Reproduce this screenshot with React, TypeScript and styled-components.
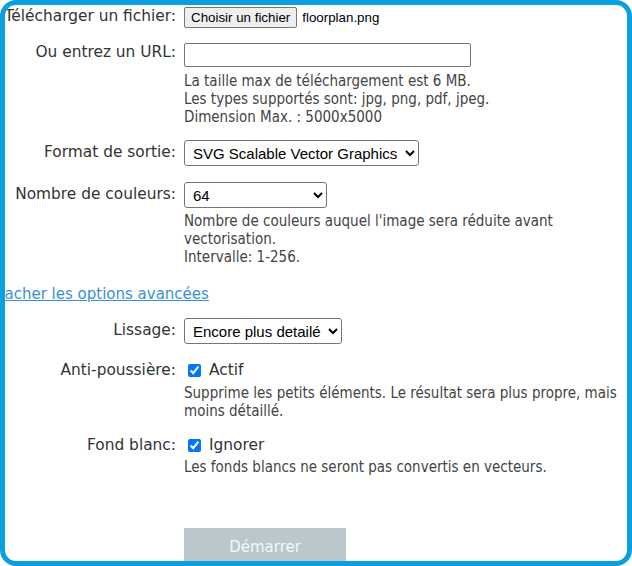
import React from "react";
import styled, { createGlobalStyle } from "styled-components";

const Global = createGlobalStyle`
  html, body { margin: 0; padding: 0; background: #fff; }
  body { font-family: "DejaVu Sans", Verdana, sans-serif; }
`;

const Frame = styled.div`
  box-sizing: border-box;
  width: 632px;
  height: 566px;
  border: 5px solid #0b9fe0;
  border-radius: 16px;
  overflow: hidden;
  background: #fff;
`;

const Form = styled.div`
  margin-left: -11px;
  padding-top: 2px;
  display: grid;
  grid-template-columns: 182px 1fr;
  column-gap: 8px;
  color: #333;
  font-size: 15.4px;
  line-height: 18px;
`;

const LabelCell = styled.div<{ $mt?: number; $pt?: number }>`
  text-align: right;
  white-space: nowrap;
  margin-top: ${(p) => p.$mt ?? 0}px;
  padding-top: ${(p) => p.$pt ?? 0}px;
`;

const Cell = styled.div<{ $mt?: number }>`
  margin-top: ${(p) => p.$mt ?? 0}px;
`;

const FileRow = styled.div`
  display: flex;
  align-items: center;
  gap: 5px;
  font-family: "Liberation Sans", Arial, sans-serif;
  font-size: 13.33px;
  color: #000;
`;

const FileButton = styled.button`
  box-sizing: border-box;
  height: 21px;
  padding: 0 6px;
  font-family: "Liberation Sans", Arial, sans-serif;
  font-size: 13.33px;
  color: #000;
  background: #efefef;
  border: 1px solid #767676;
  border-radius: 2px;
`;

const TextInput = styled.input`
  box-sizing: border-box;
  display: block;
  width: 287px;
  height: 24px;
  border: 1px solid #767676;
  border-radius: 2px;
  padding: 1px 2px;
  font-size: 15px;
  outline: none;
`;

const Select = styled.select<{ $w?: number }>`
  box-sizing: border-box;
  display: block;
  height: 26px;
  ${(p) => (p.$w ? `width: ${p.$w}px;` : "")}
  font-family: "Liberation Sans", Arial, sans-serif;
  font-size: 15px;
  color: #000;
  background: #fff;
  border: 1px solid #767676;
  border-radius: 3px;
  padding: 0 4px;
`;

const Help = styled.div<{ $mt?: number }>`
  margin-top: ${(p) => p.$mt ?? 0}px;
  color: #444;
  font-family: "DejaVu Sans Condensed", "DejaVu Sans", Tahoma, sans-serif;
  font-stretch: condensed;
  font-size: 15px;
  padding-right: 2px;
`;

const Link = styled.a`
  grid-column: 1 / -1;
  color: #3a8fd8;
  font-size: 15px;
  text-decoration: underline;
  margin-top: 19px;
  cursor: pointer;
`;

const CheckRow = styled.label`
  display: flex;
  align-items: center;
  height: 18px;
`;

const Check = styled.input`
  width: 13px;
  height: 13px;
  margin: 0 8px 0 4px;
`;

const Submit = styled.button`
  box-sizing: border-box;
  width: 162px;
  height: 38px;
  border: none;
  background: #bac7cd;
  color: #f4f7f8;
  font-family: "DejaVu Sans", Verdana, sans-serif;
  font-size: 15px;
`;

export default function App() {
  return (
    <>
      <Global />
      <Frame>
        <Form>
          <LabelCell $mt={0}>Télécharger un fichier:</LabelCell>
          <Cell $mt={0}>
            <FileRow>
              <FileButton>Choisir un fichier</FileButton>
              <span>floorplan.png</span>
            </FileRow>
          </Cell>

          <LabelCell $mt={15}>Ou entrez un URL:</LabelCell>
          <Cell $mt={15}>
            <TextInput type="text" />
            <Help $mt={5}>
              La taille max de téléchargement est 6 MB.
              <br />
              Les types supportés sont: jpg, png, pdf, jpeg.
              <br />
              Dimension Max. : 5000x5000
            </Help>
          </Cell>

          <LabelCell $mt={14} $pt={3}>Format de sortie:</LabelCell>
          <Cell $mt={14}>
            <Select defaultValue="svg">
              <option value="svg">SVG Scalable Vector Graphics</option>
            </Select>
          </Cell>

          <LabelCell $mt={16} $pt={3}>Nombre de couleurs:</LabelCell>
          <Cell $mt={16}>
            <Select defaultValue="64" $w={143}>
              <option value="64">64</option>
            </Select>
            <Help $mt={4}>
              Nombre de couleurs auquel l'image sera réduite avant
              vectorisation.
              <br />
              Intervalle: 1-256.
            </Help>
          </Cell>

          <Link>Cacher les options avancées</Link>

          <LabelCell $mt={15} $pt={3}>Lissage:</LabelCell>
          <Cell $mt={15}>
            <Select defaultValue="x">
              <option value="x">Encore plus detailé</option>
            </Select>
          </Cell>

          <LabelCell $mt={17}>Anti-poussière:</LabelCell>
          <Cell $mt={17}>
            <CheckRow>
              <Check type="checkbox" defaultChecked />
              Actif
            </CheckRow>
            <Help $mt={5}>
              Supprime les petits éléments. Le résultat sera plus propre, mais
              moins détaillé.
            </Help>
          </Cell>

          <LabelCell $mt={16}>Fond blanc:</LabelCell>
          <Cell $mt={16}>
            <CheckRow>
              <Check type="checkbox" defaultChecked />
              Ignorer
            </CheckRow>
            <Help $mt={4}>Les fonds blancs ne seront pas convertis en vecteurs.</Help>
          </Cell>

          <div />
          <Cell $mt={52}>
            <Submit>Démarrer</Submit>
          </Cell>
        </Form>
      </Frame>
    </>
  );
}
